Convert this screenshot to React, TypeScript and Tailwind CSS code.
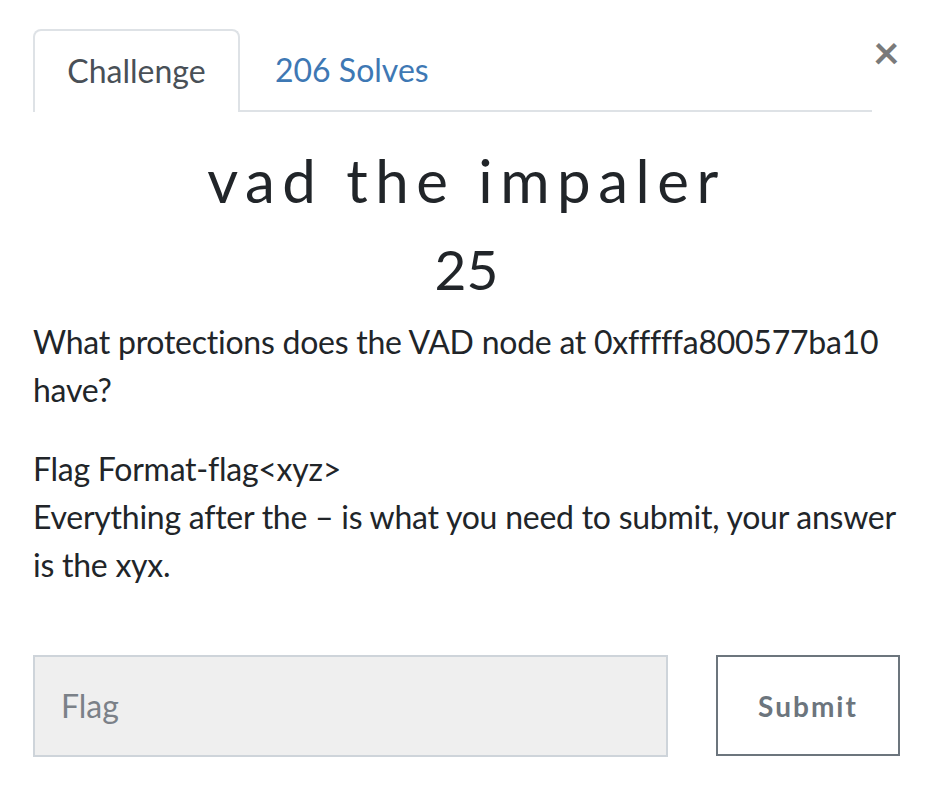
import React from "react";

export default function App() {
  return (
    <div className="w-[940px] h-[808px] bg-white relative" style={{ fontFamily: "Lato, 'Noto Sans', sans-serif" }}>
      <button className="absolute left-[873px] top-[29px] text-[46px] leading-none font-bold text-[#7a7a7a]">×</button>
      <div className="pt-[29px] pl-[33px] pr-[68px]">
        <div className="flex items-end border-b-2 border-[#dee2e6]">
          <div className="w-[207px] h-[83px] -mb-[2px] border-2 border-b-0 border-[#dee2e6] rounded-t-[8px] bg-white flex items-center justify-center text-[32px] text-[#495057] pb-[2px]">
            Challenge
          </div>
          <div className="h-[81px] px-[35px] flex items-center text-[32px] text-[#3e78b4]">206 Solves</div>
        </div>
      </div>
      <div className="pl-[33px] pr-[40px]">
        <h1 className="text-center mt-[33px] text-[60px] leading-[70px] tracking-[7.5px] text-[#212529] font-normal">vad the impaler</h1>
        <div className="text-center text-[55px] leading-[66px] text-[#212529] mt-[21px]">25</div>
        <div className="mt-[16px] text-[32px] leading-[48px] text-[#212529] tracking-[-0.25px]">
          <p>What protections does the VAD node at 0xfffffa800577ba10 have?</p>
          <p className="mt-[31px]">Flag Format-flag&lt;xyz&gt;<br />Everything after the – is what you need to submit, your answer is the xyx.</p>
        </div>
        <div className="flex mt-[66px] gap-[48px]">
          <div className="w-[635px] h-[102px] bg-[#efefef] border-2 border-[#ced4da] flex items-center pl-[26px] text-[32px] text-[#7b8188]">Flag</div>
          <div className="w-[184px] h-[101px] border-2 border-[#6c757d] flex items-center justify-center text-[28px] font-bold tracking-[2px] text-[#6c757d]">Submit</div>
        </div>
      </div>
    </div>
  );
}
